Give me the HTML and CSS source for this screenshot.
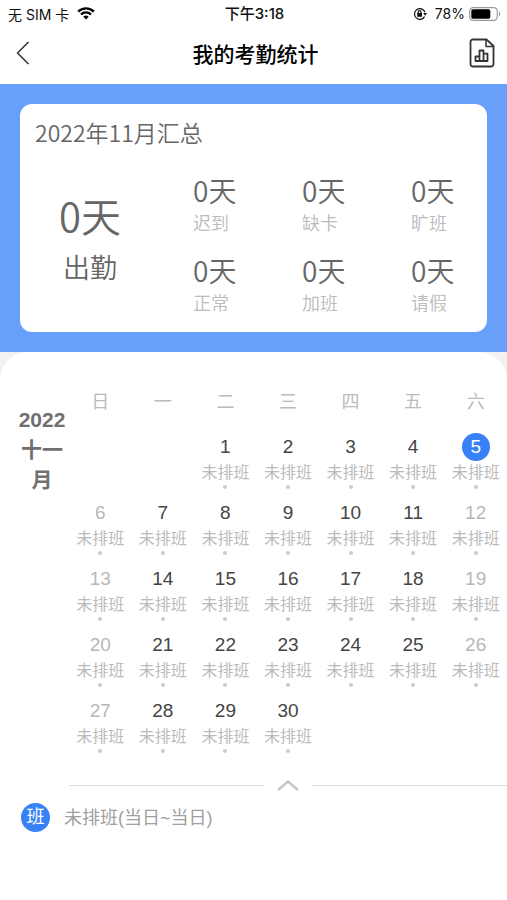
FILE: index.html
```
<!DOCTYPE html>
<html lang="zh-CN">
<head>
<meta charset="utf-8">
<meta name="viewport" content="width=device-width, initial-scale=1">
<title>我的考勤统计</title>
<link rel="stylesheet" href="styles.css">
</head>
<body>
<div class="status">
<div class="status-left">
<span>无 SIM 卡</span>
<svg width="18" height="13" viewBox="0 0 18 13" fill="none" stroke="#000" stroke-width="2.4"><path d="M1.2 4.6a11 11 0 0 1 15.6 0M4 7.5a7 7 0 0 1 10 0"/><path d="M9 12.6L6.3 9.8a3.9 3.9 0 0 1 5.4 0z" fill="#000" stroke="none"/></svg>
</div>
<div class="status-time">下午3:18</div>
<div class="status-right">
<svg width="14" height="14" viewBox="0 0 14 14" fill="none" stroke="#111" stroke-width="1.2"><path d="M11.6 9.6A5.4 5.4 0 1 1 12 5.2"/><path d="M10.2 6h3.8l-1.9 2.7z" fill="#111" stroke="none"/><rect x="4.2" y="6" width="4.8" height="3.8" fill="#111" stroke="none"/><path d="M5.2 6.2V5a1.4 1.4 0 0 1 2.8 0v1.2"/></svg>
<span class="percent">78%</span>
<svg width="32" height="14" viewBox="0 0 32 14"><rect x=".7" y=".7" width="27.6" height="12.6" rx="3.6" fill="#fff" stroke="#999" stroke-width="1.2"/><rect x="2.3" y="2.3" width="19" height="9.4" rx="1.8"/><path d="M30 4.6c1.6.6 1.6 4.2 0 4.8z" fill="#999"/></svg>
</div>
</div>
<header class="header">
<button class="iconbtn" type="button" aria-label="返回">
<svg width="14" height="24" viewBox="0 0 14 24" fill="none" stroke="#333" stroke-width="1.5"><path d="M12.5 1L1.5 12l11 11"/></svg>
</button>
<h1>我的考勤统计</h1>
<button class="iconbtn" type="button" aria-label="统计报表">
<svg width="26" height="30" viewBox="0 0 26 30" fill="none" stroke="#333" stroke-width="1.8" stroke-linejoin="round"><path d="M4 1.5h13.5L24.5 8v18a2.500 2.500 0 0 1-2.500 2.500H4A2.500 2.500 0 0 1 1.500 26V4A2.500 2.500 0 0 1 4 1.500z"/><path d="M17 1.500v7h7.500" stroke-width="1.500"/><path d="M6.500 23v-4.500h4V23zM10.500 23V12.500h4V23zM14.500 23v-7.300h4V23z"/></svg>
</button>
</header>
<section class="banner">
<div class="card">
<h2>2022年11月汇总</h2>
<div class="summary">
<div class="total"><div class="total-num">0天</div><div class="total-name">出勤</div></div>
<dl class="stats">
<div><dt>迟到</dt><dd>0天</dd></div>
<div><dt>缺卡</dt><dd>0天</dd></div>
<div><dt>旷班</dt><dd>0天</dd></div>
<div><dt>正常</dt><dd>0天</dd></div>
<div><dt>加班</dt><dd>0天</dd></div>
<div><dt>请假</dt><dd>0天</dd></div>
</dl>
</div>
</div>
</section>
<div class="sheetwrap">
<main class="sheet">
<div class="calendar">
<div class="month">2022<br>十一<br>月</div>
<table class="days">
<thead><tr><th>日</th><th>一</th><th>二</th><th>三</th><th>四</th><th>五</th><th>六</th></tr></thead>
<tbody id="days"></tbody>
</table>
</div>
<div class="fold">
<button class="foldbtn" type="button" aria-label="收起日历">
<svg width="22" height="12" viewBox="0 0 22 12" fill="none" stroke="#c4c4c8" stroke-width="2.4"><path d="M1 11l10-8.500L21 11"/></svg>
</button>
</div>
<div class="shift"><span class="badge">班</span><span>未排班(当日~当日)</span></div>
</main>
</div>
<script src="calendar.js"></script>
</body>
</html>
```

FILE: styles.css
```
* {box-sizing: border-box;}
body {margin: 0;font-family: "Liberation Sans", "Noto Sans CJK SC", sans-serif;color: #666;background-color: #fff;}
h1, h2, dl, dd {margin: 0;}
button {border: 0;padding: 0;background: none;cursor: pointer;}
svg {display: block;}

.status {display: grid;grid-template-columns: 1fr auto 1fr;align-items: center;height: 27px;padding: 0 6px 0 8px;font-family: Inter, "Noto Sans CJK SC", sans-serif;font-size: 14px;color: #111;}
.status-left, .status-right {display: flex;align-items: center;gap: 8px;}
.status-right {justify-content: flex-end;gap: 4px;}
.percent {padding-left: 4px;}
.status-time {font-size: 15px;line-height: 20px;font-weight: 500;}

.header {display: flex;align-items: center;justify-content: space-between;height: 57px;padding: 0 12px 5px 16px;}
.header h1 {font-family: "Noto Sans CJK SC", sans-serif;font-size: 21px;line-height: 32px;font-weight: 500;color: #000;}
.iconbtn {display: flex;align-items: center;width: 26px;height: 32px;}

.banner {background-color: #689ffb;padding: 20px;}
.card {background-color: #fff;border-radius: 12px;padding: 12px 0 18px;font-family: "Noto Sans CJK SC", sans-serif;font-weight: 350;}
.card h2 {padding-left: 15px;font-size: 23px;line-height: 32px;font-weight: 350;}
.summary {display: flex;padding-top: 22px;}
.total {flex: 0 0 30%;display: flex;flex-direction: column;align-items: center;padding-top: 20px;}
.total-num {font-size: 40px;line-height: 50px;}
.total-name {font-size: 27px;line-height: 54px;}
.stats {flex: 1;display: grid;grid-template-columns: repeat(3, 1fr);row-gap: 16px;}
.stats div {display: flex;flex-direction: column-reverse;padding-left: 33px;}
.stats dt {font-size: 18px;line-height: 24px;font-weight: 350;color: #bbb;}
.stats dd {font-size: 28px;line-height: 40px;}

.sheetwrap {background-color: #f4f1f3;}
.sheet {background-color: #fff;border-radius: 28px 28px 0 0;padding-top: 33px;}
.calendar {display: flex;}
.month {flex: 0 0 69px;padding: 20px 0 0 15px;text-align: center;font-size: 21px;line-height: 30px;font-weight: bold;color: #707070;}
.days {flex: 1;table-layout: fixed;border-collapse: collapse;}
.days th {height: 48px;padding: 0 0 14px;font-size: 18px;line-height: 32px;font-weight: 400;color: #bbb;}
.days td {height: 66px;padding: 0;vertical-align: top;text-align: center;}
.date {display: block;width: 28px;height: 28px;margin: 0 auto;border-radius: 50%;font-size: 19px;line-height: 28px;color: #444;}
.weekend .date {color: #b8b8b8;}
.today .date {background-color: #3880f5;color: #fff;}
.note {display: block;font-size: 16px;line-height: 24px;color: #bbb;white-space: nowrap;}
.note::after {content: "";display: block;width: 4px;height: 4px;margin: 0 auto;border-radius: 50%;background-color: #ccc;}

.fold {display: flex;align-items: center;gap: 12px;margin: 4px 0 0 69px;height: 36px;}
.fold::before, .fold::after {content: "";flex: 1;height: 1px;background-color: #ddd;}
.foldbtn {padding: 0 1px;}
.shift {display: flex;align-items: center;gap: 14px;padding: 0 21px;font-size: 18px;line-height: 28px;color: #a0a0a0;}
.badge {width: 29px;height: 29px;border-radius: 50%;background-color: #3880f5;color: #fff;text-align: center;}
```

FILE: calendar.js
```
var tb = document.getElementById("days");
// November 2022 starts on a Tuesday
var first = 2, total = 30, today = 5;
for (var w = 0; w < 5; w++) {
  var row = document.createElement("tr");
  for (var i = 0; i < 7; i++) {
    var td = document.createElement("td");
    var d = w * 7 + i - first + 1;
    if (d > 0 && d <= total) {
      if (d == today) td.className = "today";
      else if (i == 0 || i == 6) td.className = "weekend";
      var date = document.createElement("span");
      date.className = "date";
      date.textContent = d;
      var note = document.createElement("span");
      note.className = "note";
      note.textContent = "未排班";
      td.append(date, note);
    }
    row.appendChild(td);
  }
  tb.appendChild(row);
}
```
